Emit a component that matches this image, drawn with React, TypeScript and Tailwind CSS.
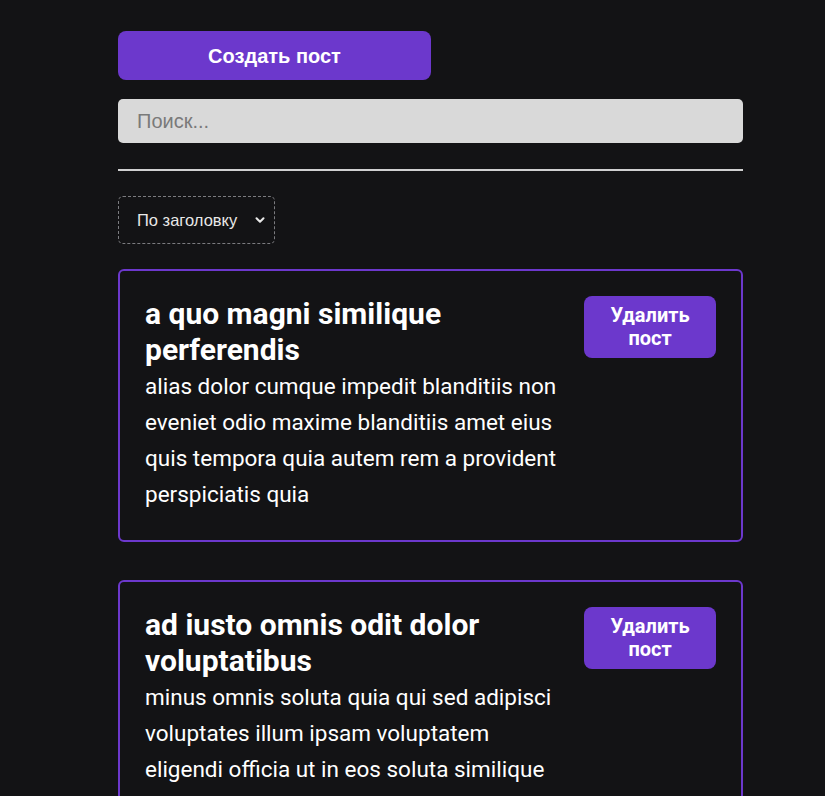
const posts = [
  {
    id: 1,
    title: "a quo magni similique perferendis",
    body: "alias dolor cumque impedit blanditiis non eveniet odio maxime blanditiis amet eius quis tempora quia autem rem a provident perspiciatis quia",
  },
  {
    id: 2,
    title: "ad iusto omnis odit dolor voluptatibus",
    body: "minus omnis soluta quia qui sed adipisci voluptates illum ipsam voluptatem eligendi officia ut in eos soluta similique molestias praesentium blanditiis",
  },
];

function PostItem({ title, body }: { title: string; body: string }) {
  return (
    <div className="mt-[25px] mb-[38px] flex justify-between gap-5 rounded-[6px] border-2 border-[#6c38cc] px-[25px] pt-[25px] pb-[28px]">
      <div className="w-[420px] font-['Roboto',sans-serif] text-white">
        <h2 className="text-[30px] font-bold leading-[36px]">{title}</h2>
        <p className="text-[22.5px] leading-[36px]">{body}</p>
      </div>
      <button className="h-[62px] w-[132px] shrink-0 rounded-[8px] bg-[#6c38cc] font-['Roboto',sans-serif] text-[20px] font-bold leading-[23px] text-white">
        Удалить
        <br />
        пост
      </button>
    </div>
  );
}

export default function App() {
  return (
    <div className="min-h-[796px] bg-[#131315] pl-[118px] pt-[31px]">
      <div className="w-[625px]">
        <button className="h-[49px] w-[313px] rounded-[8px] bg-[#6c38cc] font-['Liberation_Sans',Arial,sans-serif] text-[20px] font-bold text-white">
          Создать пост
        </button>

        <input
          className="mt-[19px] block h-[44px] w-full rounded-[5px] bg-[#d9d9d9] px-[19px] font-['Liberation_Sans',Arial,sans-serif] text-[20px] text-black placeholder:text-[#7a7a7a] outline-none"
          placeholder="Поиск..."
        />

        <hr className="mt-[26px] border-t-2 border-[#d0d0d0]" />

        <div className="mt-[25px] flex h-[48px] w-[157px] items-center justify-between rounded-[5px] border border-dashed border-[#7b7b7f] pl-[18px] pr-[7px] font-['Liberation_Sans',Arial,sans-serif] text-[16.5px] text-[#e8e8e8]">
          <span>По заголовку</span>
          <svg width="14" height="14" viewBox="0 0 24 24" fill="none" stroke="#e8e8e8" strokeWidth="3.5" strokeLinecap="round" strokeLinejoin="round">
            <path d="M6 9l6 6 6-6" />
          </svg>
        </div>

        {posts.map((p) => (
          <PostItem key={p.id} title={p.title} body={p.body} />
        ))}
      </div>
    </div>
  );
}
